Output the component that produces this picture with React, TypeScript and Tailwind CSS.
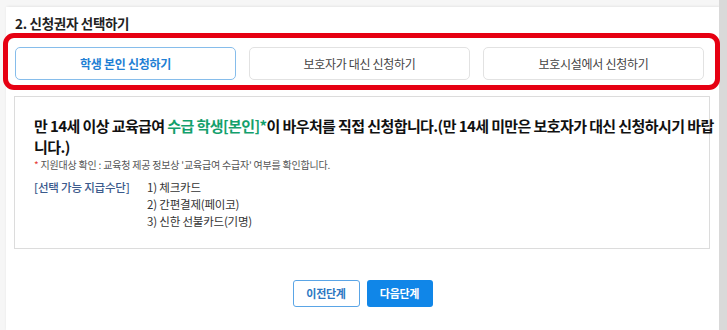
import React from "react";

const font = { fontFamily: '"Noto Sans CJK KR", "Noto Sans", sans-serif' };

const choices = [
  { id: "self", label: "학생 본인 신청하기", active: true },
  { id: "guardian", label: "보호자가 대신 신청하기", active: false },
  { id: "facility", label: "보호시설에서 신청하기", active: false },
];

const methods = ["1) 체크카드", "2) 간편결제(페이코)", "3) 신한 선불카드(기명)"];

export default function App() {
  return (
    <div
      className="relative flex h-[330px] w-[727px] overflow-hidden bg-[#f6f6f6] font-['Noto_Sans_CJK_KR',sans-serif]"
      style={font}
    >
      {/* card */}
      <div className="ml-[6px] mt-[7px] flex w-[713px] flex-col bg-white shadow-[1px_0_3px_rgba(0,0,0,0.12)]">
        <h2 className="pl-[9px] pt-[6px] text-[13.5px] font-semibold leading-[20px] tracking-[-0.3px] text-[#222]">
          2. 신청권자 선택하기
        </h2>

        <div className="mt-[14px] flex gap-[13px] pl-[9px]">
          {choices.map((c) => (
            <div
              key={c.id}
              className={
                c.active
                  ? "flex h-[33px] w-[221px] items-center justify-center rounded-[5px] border border-solid border-[#86bdeb] bg-white text-[12px] font-semibold tracking-[-0.3px] text-[#1f7fd4]"
                  : "flex h-[33px] w-[221px] items-center justify-center rounded-[5px] border border-solid border-[#e2e2e2] bg-white text-[12px] tracking-[-0.3px] text-[#444]"
              }
            >
              {c.label}
            </div>
          ))}
        </div>

        {/* notice box */}
        <div className="ml-[8px] mt-[16px] h-[153px] w-[696px] border border-[#dcdcdc] pl-[19px] pt-[18px]">
          <p className="whitespace-nowrap text-[15px] font-bold leading-[21px] tracking-[-0.6px] text-[#111]">
            만 14세 이상 교육급여 <span className="text-[#13a06c]">수급 학생[본인]*</span>이 바우처를 직접 신청합니다.(만 14세 미만은 보호자가 대신 신청하시기 바랍
            <br />
            니다.)
          </p>
          <p className="mt-[1px] text-[10px] leading-[14px] tracking-[-0.2px] text-[#555]">
            <span className="text-[#e53935]">*</span> 지원대상 확인 : 교육청 제공 정보상 '교육급여 수급자' 여부를 확인합니다.
          </p>
          <div className="mt-[7px] flex text-[11.5px] leading-[17px] tracking-[-0.2px]">
            <span className="w-[113px] font-medium text-[#3b5a8c]">[선택 가능 지급수단]</span>
            <ul className="text-[#333]">
              {methods.map((m) => (
                <li key={m}>{m}</li>
              ))}
            </ul>
          </div>
        </div>

        <div className="mt-[31px] flex justify-center gap-[7px]">
          <button className="h-[27px] w-[67px] rounded-[3px] border border-[#5aa5e6] bg-white text-[11px] font-semibold tracking-[-0.3px] text-[#2b77c2]">
            이전단계
          </button>
          <button className="h-[27px] w-[66px] rounded-[3px] bg-[#1086e8] text-[11px] font-semibold tracking-[-0.3px] text-white">
            다음단계
          </button>
        </div>
      </div>

      {/* right gutter */}
      <div className="w-[8px] bg-[#d9d9d9]" />

      {/* annotation highlight */}
      <div className="pointer-events-none absolute left-[3px] top-[33px] h-[57px] w-[717px] rounded-[11px] border-[5px] border-[#e60012]" />
    </div>
  );
}
